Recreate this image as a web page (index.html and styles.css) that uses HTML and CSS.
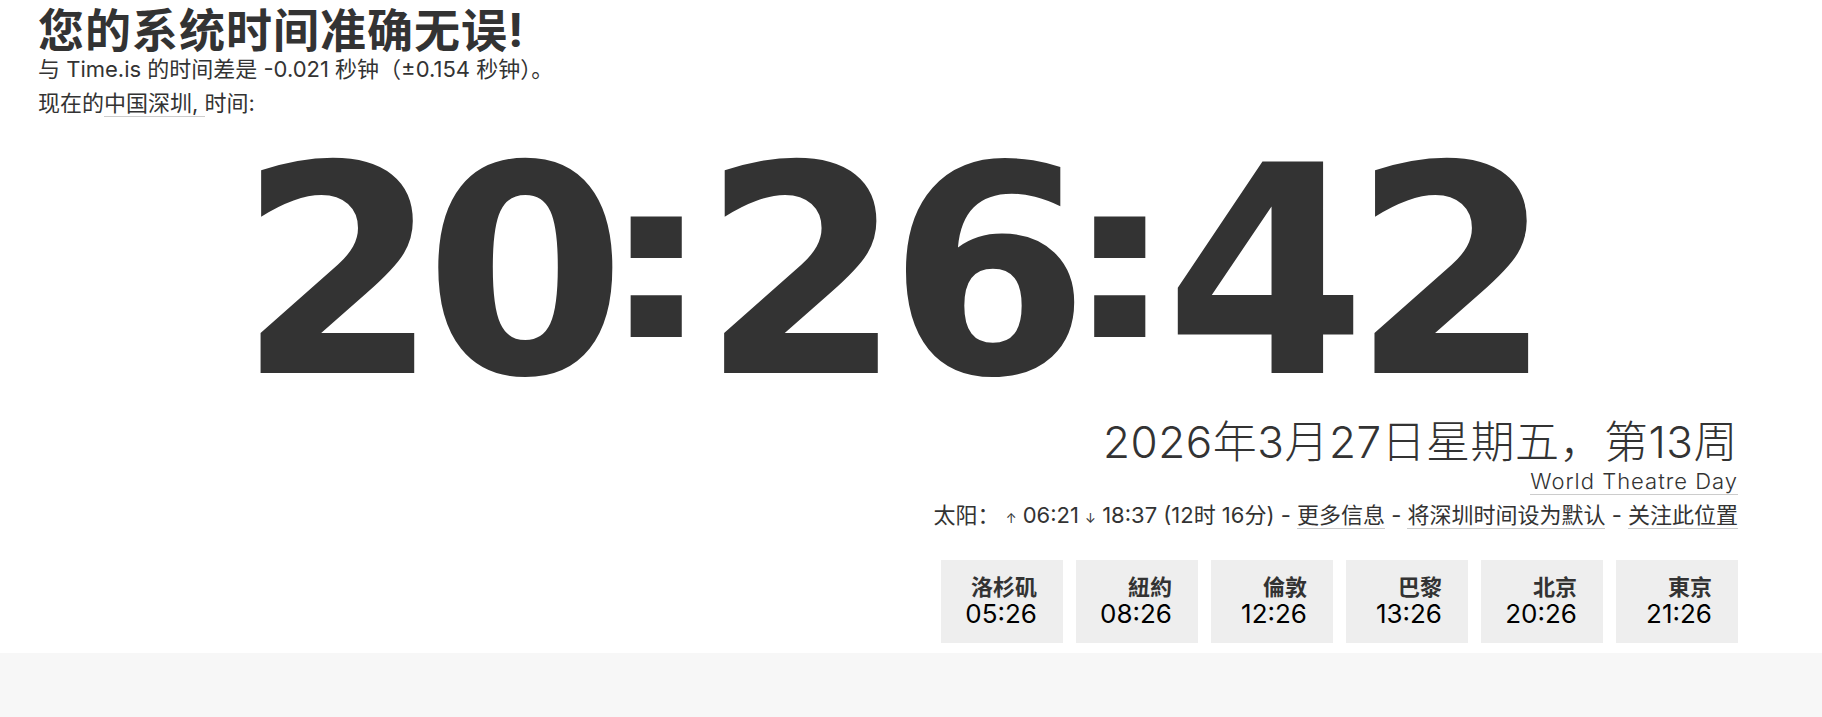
FILE: index.html
```html
<!DOCTYPE html>
<html lang="zh-CN">
<head>
<meta charset="utf-8">
<title>Time.is - 深圳</title>
<link rel="stylesheet" href="styles.css">
</head>
<body>
<main class="wrap">
  <h1 class="status">您的系统时间准确无误!</h1>
  <p class="diff">与 Time.is 的时间差是 -0.021 秒钟（±0.154 秒钟）。</p>
  <p class="loc">现在的<a href="#">中国深圳, </a>时间:</p>
  <div class="clock">20<span class="colon">:</span>26<span class="colon">:</span>42</div>
  <section class="info">
    <div class="date">2026年3月27日星期五，第13周</div>
    <div class="holiday"><a href="#">World Theatre Day</a></div>
    <div class="sun">太阳： <span class="arrow">↑</span> 06:21 <span class="arrow">↓</span> 18:37 (12时 16分) - <a href="#">更多信息</a> - <a href="#">将深圳时间设为默认</a> - <a href="#">关注此位置</a></div>
    <ul class="cities">
      <li class="city"><span class="name">洛杉矶</span><span class="time">05:26</span></li>
      <li class="city"><span class="name">紐約</span><span class="time">08:26</span></li>
      <li class="city"><span class="name">倫敦</span><span class="time">12:26</span></li>
      <li class="city"><span class="name">巴黎</span><span class="time">13:26</span></li>
      <li class="city"><span class="name">北京</span><span class="time">20:26</span></li>
      <li class="city"><span class="name">東京</span><span class="time">21:26</span></li>
    </ul>
  </section>
</main>
<footer class="band"></footer>
</body>
</html>
```
FILE: styles.css
```css
html, body {
  margin: 0;
  padding: 0;
}
body {
  min-height: 100vh;
  display: flex;
  flex-direction: column;
  background: #fff;
  color: #333;
  font-family: "Inter", "Noto Sans CJK SC", sans-serif;
}
a {
  color: #333;
  text-decoration: none;
  border-bottom: 1px solid #ccc;
}
.wrap {
  padding: 4px 84px 10px 38px;
}
.status {
  margin: 0;
  font-size: 46px;
  line-height: 52px;
  font-weight: 700;
  letter-spacing: 1px;
}
.diff {
  margin: 0;
  font-size: 22px;
  line-height: 26px;
}
.loc {
  margin: 0;
  font-size: 22px;
  line-height: 43px;
}
.clock {
  font-family: "DejaVu Sans", sans-serif;
  font-weight: 700;
  font-size: 290px;
  line-height: 295px;
  letter-spacing: -15px;
  text-align: center;
  color: #333;
}
.colon {
  display: inline-block;
  margin: 0 -13px;
  line-height: 200px;
  letter-spacing: 0;
  vertical-align: 36px;
  transform-origin: 50% 100%;
  transform: scaleY(0.76);
}
.info {
  text-align: right;
}
.date {
  font-size: 44px;
  line-height: 44px;
  font-weight: 300;
  letter-spacing: 0.5px;
}
.holiday {
  font-size: 22px;
  line-height: 35px;
  font-weight: 300;
  letter-spacing: 1px;
}
.sun {
  font-size: 22px;
  line-height: 32px;
}
.arrow {
  font-size: 13px;
}
.cities {
  list-style: none;
  margin: 26px 0 0;
  padding: 0;
  display: flex;
  justify-content: flex-end;
  gap: 13px;
}
.city {
  width: 122px;
  box-sizing: border-box;
  padding: 14px 26px 16px 0;
  background: #eee;
  display: flex;
  flex-direction: column;
  align-items: flex-end;
}
.name {
  font-size: 22px;
  line-height: 27px;
  font-weight: 700;
  color: #333;
}
.time {
  font-size: 26px;
  line-height: 26px;
  color: #000;
}
.band {
  flex: 1;
  background: #f7f7f7;
}
```
